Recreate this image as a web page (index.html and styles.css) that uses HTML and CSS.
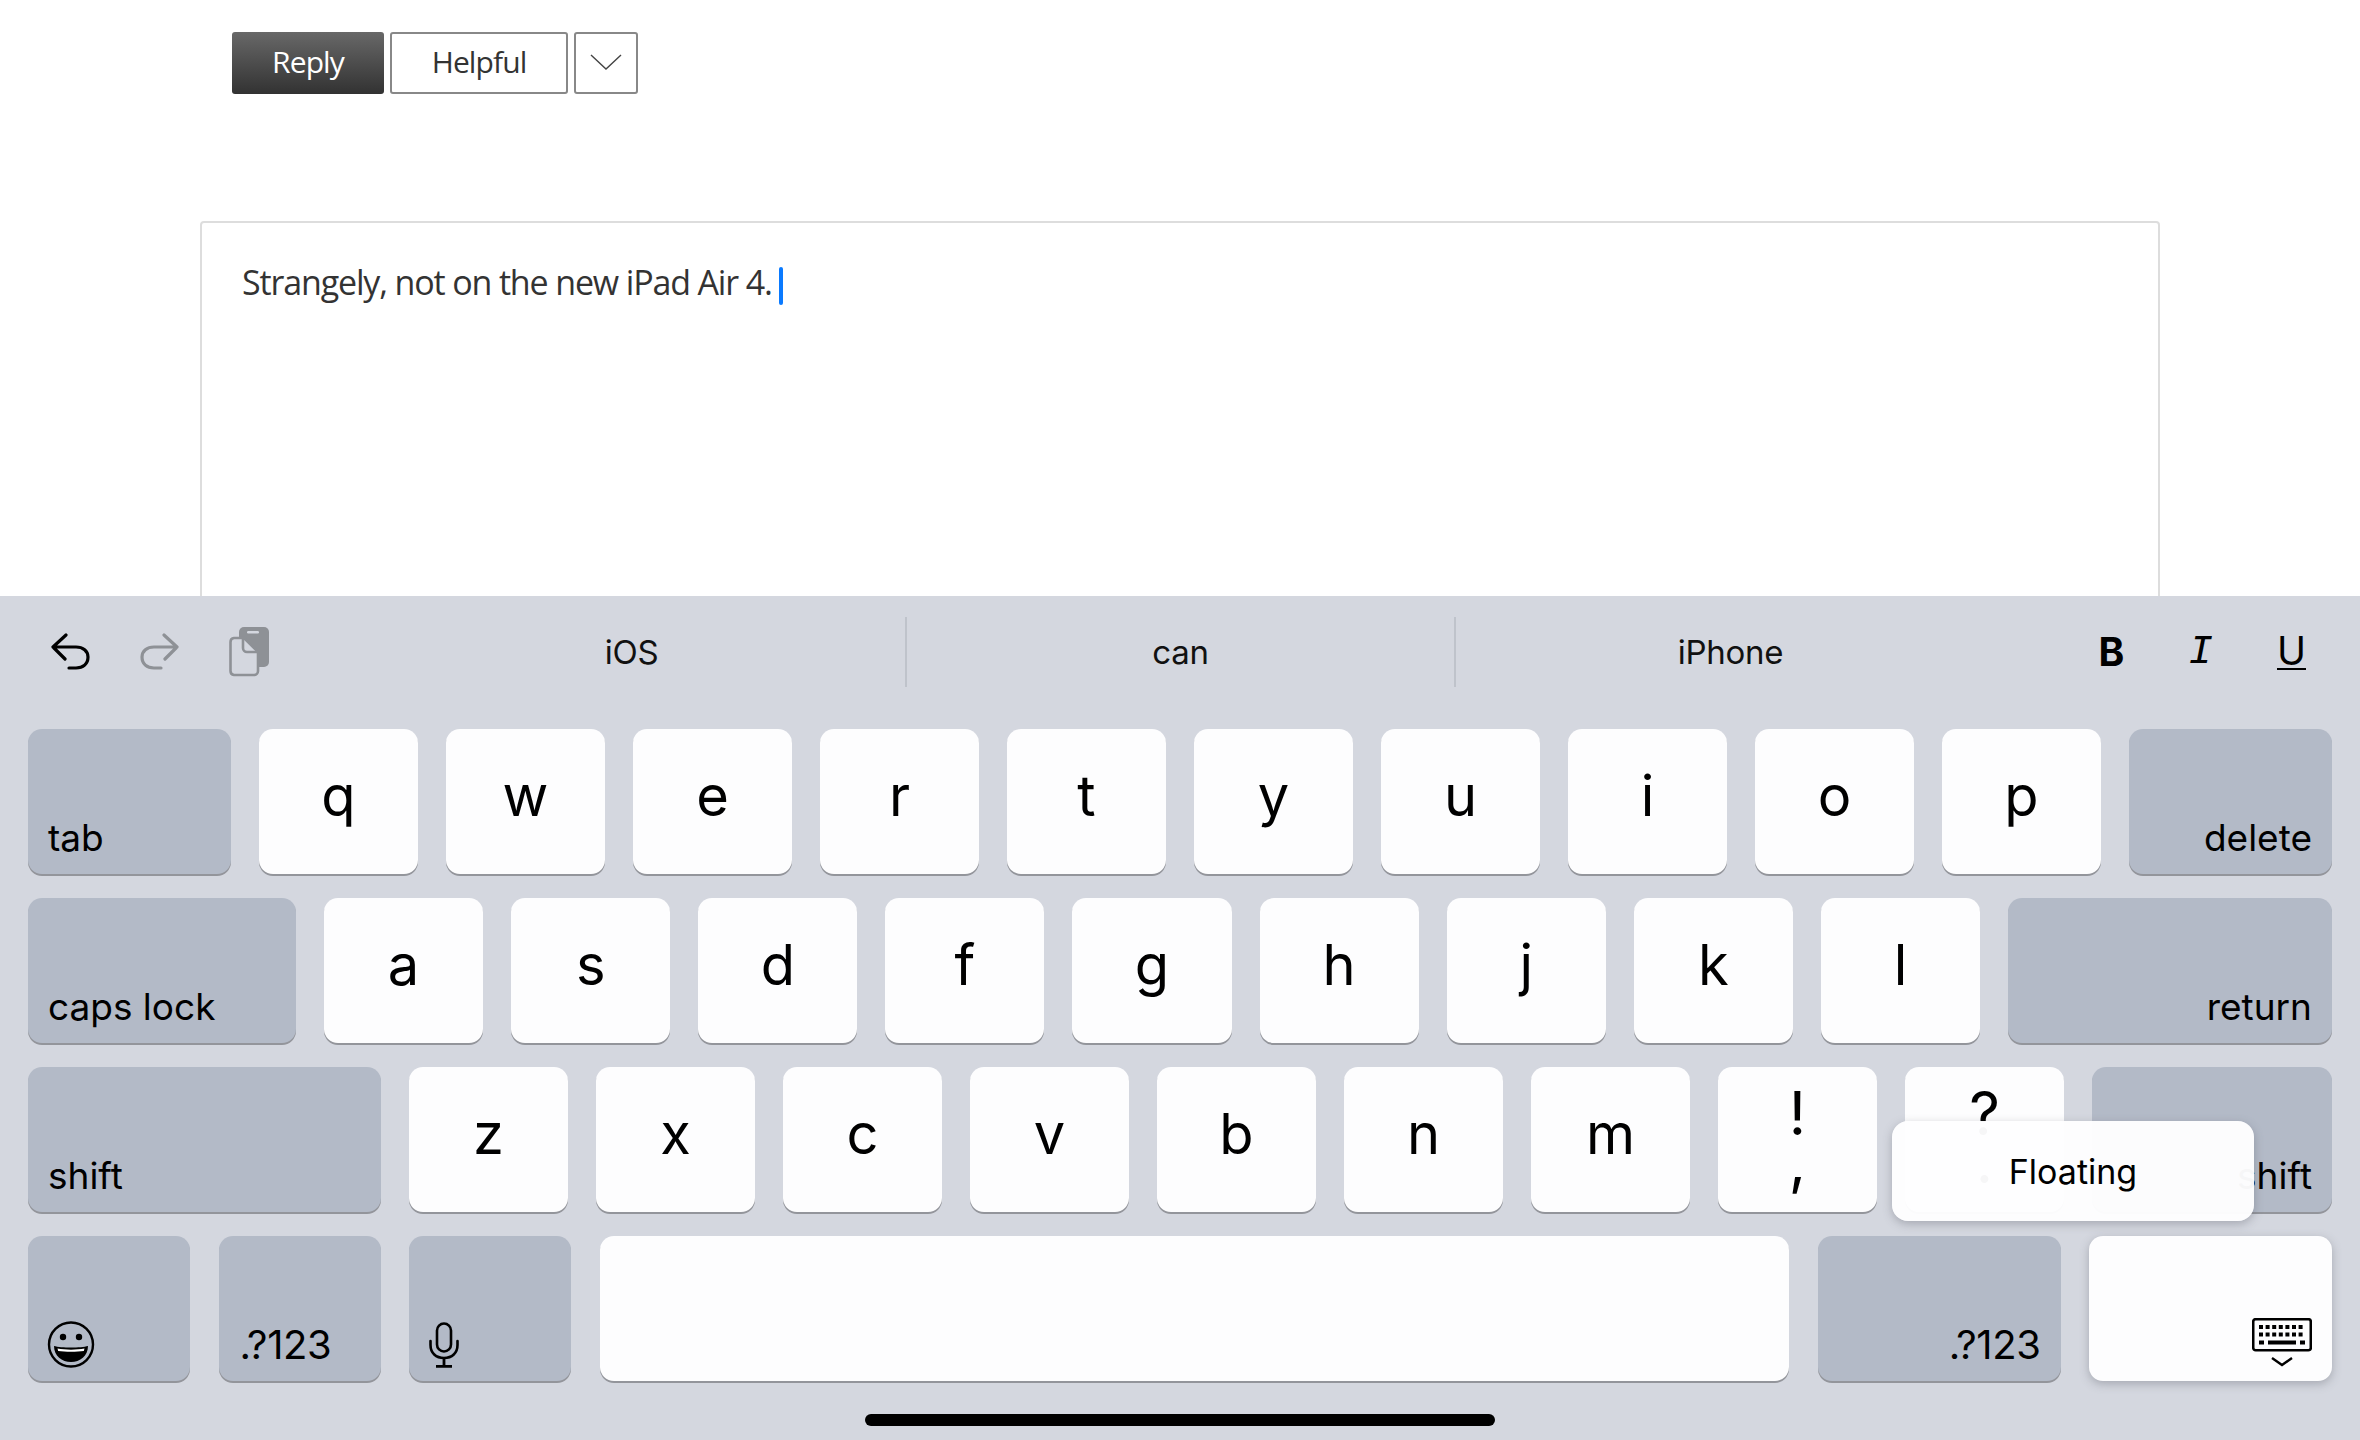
FILE: index.html
```html
<!DOCTYPE html>
<html lang="en">
<head>
  <meta charset="UTF-8" />
  <title>Reply</title>
  <link rel="stylesheet" href="styles.css">
</head>
<body>
  <!-- Page behind the keyboard -->
  <div class="thread">
    <div class="actions">
      <button class="btn btn-dark">Reply</button>
      <button class="btn btn-light">Helpful</button>
      <button class="btn btn-more">
        <svg width="34" height="18" viewBox="0 0 34 18"><path d="M2 2 L17 16 L32 2" fill="none" stroke="#444" stroke-width="1.4"/></svg>
      </button>
    </div>
    <div class="composer">
      <p class="composer-text">Strangely, not on the new iPad Air 4.<span class="caret"></span></p>
    </div>
  </div>

  <!-- Keyboard -->
  <div class="keyboard">
    <div class="toolbar">
      <div class="tools">
        <svg class="tool tool-undo" width="40" height="38" viewBox="0 0 40 38"><path d="M16 2 L3 14 L15 26 M3 14 H26 C33 14 38 18 38 24 C38 31 33 35 26 35 H19" fill="none" stroke="#000" stroke-width="3.2" stroke-linecap="round" stroke-linejoin="round"/></svg>
        <svg class="tool tool-redo" width="40" height="38" viewBox="0 0 40 38"><path d="M24 2 L37 14 L25 26 M37 14 H14 C7 14 2 18 2 24 C2 31 7 35 14 35 H21" fill="none" stroke="#8e9196" stroke-width="3.2" stroke-linecap="round" stroke-linejoin="round"/></svg>
        <svg class="tool tool-paste" width="41" height="50" viewBox="0 0 41 50">
          <rect x="10" y="0" width="30" height="40" rx="5" fill="#8e9196"/>
          <rect x="18" y="4" width="12" height="2.4" rx="1.2" fill="#d4d7df"/>
          <path d="M5 11 H15 L29 25 V44 A4 4 0 0 1 25 48 H5 A4 4 0 0 1 1.5 44 V15 A4 4 0 0 1 5 11 Z" fill="#d4d7df" stroke="#8e9196" stroke-width="2.6"/>
          <path d="M14 12 V21 A4 4 0 0 0 18 25 H28" fill="none" stroke="#8e9196" stroke-width="2.6"/>
        </svg>
      </div>
      <div class="suggestions">
        <div class="suggestion">iOS</div>
        <div class="suggestion">can</div>
        <div class="suggestion">iPhone</div>
      </div>
      <div class="format">
        <span class="format-b">B</span>
        <span class="format-i">I</span>
        <span class="format-u">U</span>
      </div>
    </div>

    <div class="rows">
      <div class="row">
        <div class="key key-alt key-tab">tab</div>
        <div class="key">q</div>
        <div class="key">w</div>
        <div class="key">e</div>
        <div class="key">r</div>
        <div class="key">t</div>
        <div class="key">y</div>
        <div class="key">u</div>
        <div class="key">i</div>
        <div class="key">o</div>
        <div class="key">p</div>
        <div class="key key-alt key-right key-tab">delete</div>
      </div>
      <div class="row">
        <div class="key key-alt key-caps">caps lock</div>
        <div class="key">a</div>
        <div class="key">s</div>
        <div class="key">d</div>
        <div class="key">f</div>
        <div class="key">g</div>
        <div class="key">h</div>
        <div class="key">j</div>
        <div class="key">k</div>
        <div class="key">l</div>
        <div class="key key-alt key-right key-return">return</div>
      </div>
      <div class="row">
        <div class="key key-alt key-shift">shift</div>
        <div class="key">z</div>
        <div class="key">x</div>
        <div class="key">c</div>
        <div class="key">v</div>
        <div class="key">b</div>
        <div class="key">n</div>
        <div class="key">m</div>
        <div class="key key-double"><span>!</span><span>,</span></div>
        <div class="key key-double"><span>?</span><span>.</span></div>
        <div class="key key-alt key-right key-shift-r">shift</div>
      </div>
      <div class="row row-bottom">
        <div class="key key-alt key-small key-emoji">
          <svg width="48" height="47" viewBox="0 0 48 47">
            <circle cx="24" cy="23.5" r="22" fill="none" stroke="#000" stroke-width="2.4"/>
            <circle cx="16" cy="16" r="3.2"/>
            <circle cx="32" cy="16" r="3.2"/>
            <path d="M7 25 C14 27 34 27 41 25 C41 35 33 41 24 41 C15 41 7 35 7 25 Z"/>
            <path d="M10.5 27.6 C18 29 30 29 37.5 27.6 L36.8 30 C30 31 18 31 11.2 30 Z" fill="#fff"/>
          </svg>
        </div>
        <div class="key key-alt key-small key-num">.?123</div>
        <div class="key key-alt key-small key-mic">
          <svg width="30" height="46" viewBox="0 0 30 46">
            <rect x="8" y="1.5" width="14" height="28" rx="7" fill="none" stroke="#000" stroke-width="2.6"/>
            <path d="M1.5 19 V23 C1.5 31 7 36 15 36 C23 36 28.5 31 28.5 23 V19" fill="none" stroke="#000" stroke-width="2.6" stroke-linecap="round"/>
            <path d="M15 36 V44 M7 44.4 H23" fill="none" stroke="#000" stroke-width="2.8"/>
          </svg>
        </div>
        <div class="key key-space"></div>
        <div class="key key-alt key-right key-wide key-num">.?123</div>
        <div class="key key-right key-wide key-hide">
          <svg width="60" height="50" viewBox="0 0 60 50">
            <rect x="1.2" y="1.2" width="57.6" height="31" rx="2.5" fill="none" stroke="#000" stroke-width="2.6"/>
            <path d="M7 9 H53 M7 16.5 H53" fill="none" stroke="#000" stroke-width="4" stroke-dasharray="4 2.6"/>
            <path d="M7 24.5 H12 M16 24.5 H44 M48 24.5 H53" fill="none" stroke="#000" stroke-width="4"/>
            <path d="M20 40 L30 47 L40 40" fill="none" stroke="#000" stroke-width="2.4"/>
          </svg>
        </div>
      </div>
      <div class="popup">Floating</div>
    </div>

    <div class="home-bar"></div>
  </div>
</body>
</html>
```

FILE: styles.css
```css
* {
  box-sizing: border-box;
}

body {
  margin: 0;
  width: 2360px;
  height: 1440px;
  overflow: hidden;
  background: #fff;
  font-family: Inter, "Liberation Sans", sans-serif;
}

/* Page behind the keyboard */
.thread {
  height: 596px;
  overflow: hidden;
  padding: 32px 200px 0;
}

.actions {
  display: flex;
  gap: 6px;
  margin-left: 32px;
}

.btn {
  height: 62px;
  padding: 0 0 3px;
  border-radius: 3px;
  font-family: "Open Sans", sans-serif;
  font-size: 30px;
  letter-spacing: -0.9px;
}

.btn-dark {
  width: 152px;
  border: none;
  background: linear-gradient(#686868, #323232);
  color: #fff;
}

.btn-light {
  width: 178px;
  border: 2px solid #888;
  background: #fff;
  color: #333;
}

.btn-more {
  width: 64px;
  border: 2px solid #888;
  background: #fff;
  display: flex;
  align-items: center;
  justify-content: center;
}

.composer {
  height: 600px;
  margin-top: 127px;
  padding: 35px 40px;
  border: 2px solid #ddd;
  border-radius: 4px;
}

.composer-text {
  margin: 0;
  font-family: "Open Sans", sans-serif;
  font-size: 34px;
  line-height: 48px;
  letter-spacing: -1.15px;
  color: #333;
}

.caret {
  display: inline-block;
  width: 4px;
  height: 38px;
  margin-left: 7px;
  vertical-align: middle;
  border-radius: 2px;
  background: #0a7aff;
}

/* Keyboard */
.keyboard {
  height: 844px;
  background: #d4d7df;
  padding: 0 28px;
}

.toolbar {
  height: 133px;
  padding-bottom: 22px;
  display: flex;
  align-items: center;
}

.tools {
  width: 330px;
  display: flex;
  align-items: center;
  gap: 50px;
  padding-left: 22px;
}

.tool-paste {
  margin-left: -1px;
}

.suggestions {
  display: flex;
  height: 70px;
}

.suggestion {
  width: 549px;
  display: flex;
  align-items: center;
  justify-content: center;
  font-size: 33px;
  letter-spacing: -0.3px;
  color: #111;
  border-right: 2px solid #bfc3cb;
}

.suggestion:last-child {
  border-right: none;
}

.format {
  flex: 1;
  display: flex;
  align-items: center;
  justify-content: flex-end;
  gap: 64px;
  padding-right: 26px;
  color: #000;
}

.format-b {
  font-size: 39px;
  font-weight: 700;
}

.format-i {
  font-family: "Liberation Mono", monospace;
  font-style: italic;
  font-size: 41px;
}

.format-u {
  font-size: 39px;
  line-height: 34px;
  border-bottom: 2px solid #000;
}

.rows {
  position: relative;
  display: flex;
  flex-direction: column;
  gap: 24px;
}

.row {
  display: flex;
  gap: 28px;
  height: 145px;
}

.key {
  flex: 1;
  display: flex;
  align-items: center;
  justify-content: center;
  min-width: 0;
  padding-bottom: 12px;
  border-radius: 14px;
  background: #fdfdfe;
  box-shadow: 0 2px 0 #93959b;
  font-size: 56px;
  color: #000;
  white-space: nowrap;
}

.key-alt {
  align-items: flex-end;
  justify-content: flex-start;
  padding: 0 20px 14px;
  background: #b3bac7;
  font-size: 37px;
}

.key-right {
  justify-content: flex-end;
}

.key-tab {
  flex: 0 0 203px;
}

.key-caps {
  flex: 0 0 268px;
}

.key-return {
  flex: 0 0 324px;
}

.key-shift {
  flex: 0 0 353px;
}

.key-shift-r {
  flex: 0 0 240px;
}

.key-double {
  flex-direction: column;
  padding-bottom: 6px;
  font-size: 60px;
  line-height: 48px;
}

.row-bottom {
  gap: 28.5px;
}

.key-small {
  flex: 0 0 162px;
  align-items: flex-end;
  padding-bottom: 12px;
}

.key-emoji {
  padding-left: 19px;
}

.key-num {
  font-size: 40px;
  letter-spacing: -0.4px;
}

.key-small.key-num {
  padding-left: 21px;
  padding-bottom: 12px;
}

.key-right.key-num {
  padding-bottom: 12px;
}

.key-small svg {
  margin-bottom: 1px;
}

.key-wide {
  flex: 0 0 243px;
}

.key-hide {
  align-items: flex-end;
  padding: 0 20px 13px;
  box-shadow: 0 3px 10px rgba(80, 84, 94, 0.35);
}

/* Key hint that hangs over the bottom rows */
.popup {
  position: absolute;
  left: 1864px;
  top: 392px;
  width: 362px;
  height: 100px;
  display: flex;
  align-items: center;
  justify-content: center;
  border-radius: 16px;
  background: rgba(254, 254, 255, 0.97);
  box-shadow: 0 3px 10px rgba(80, 84, 94, 0.35);
  font-size: 34px;
  color: #000;
}

.home-bar {
  width: 630px;
  height: 12px;
  margin: 33px auto 0;
  border-radius: 6px;
  background: #000;
}
```
